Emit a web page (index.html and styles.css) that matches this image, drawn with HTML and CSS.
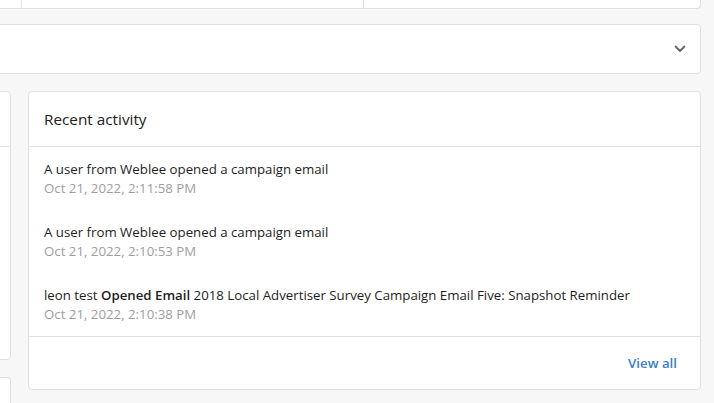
FILE: index.html
```html
<!DOCTYPE html>
<html lang="en">
<head>
<meta charset="utf-8">
<title>Dashboard</title>
<link rel="stylesheet" href="styles.css">
</head>
<body>
<div class="page">
  <div class="top-card">
    <div class="top-cell"></div>
    <div class="top-cell"></div>
    <div class="top-cell"></div>
  </div>
  <div class="collapse-card">
    <svg class="chevron" width="12" height="8" viewBox="0 0 12 8" aria-hidden="true">
      <path d="M1.5 1.5 L6 6 L10.5 1.5" fill="none" stroke="#666" stroke-width="1.8" stroke-linecap="round" stroke-linejoin="round"/>
    </svg>
  </div>
  <div class="columns">
    <div class="left-col">
      <div class="side-card">
        <div class="side-head"></div>
      </div>
      <div class="side-card side-card-next"></div>
    </div>
    <section class="activity">
      <header class="activity-head">Recent activity</header>
      <div class="activity-body">
        <div class="item">
          <div class="item-text">A user from Weblee opened a campaign email</div>
          <div class="item-date">Oct 21, 2022, 2:11:58 PM</div>
        </div>
        <div class="item">
          <div class="item-text">A user from Weblee opened a campaign email</div>
          <div class="item-date">Oct 21, 2022, 2:10:53 PM</div>
        </div>
        <div class="item">
          <div class="item-text">leon test <strong>Opened Email</strong> 2018 Local Advertiser Survey Campaign Email Five: Snapshot Reminder</div>
          <div class="item-date">Oct 21, 2022, 2:10:38 PM</div>
        </div>
      </div>
      <footer class="activity-foot">
        <a class="view-all" href="#">View all</a>
      </footer>
    </section>
  </div>
</div>
</body>
</html>
```

FILE: styles.css
```css
* { box-sizing: border-box; }

html, body {
  margin: 0;
  padding: 0;
  background: #f7f7f7;
  font-family: "Segoe UI", "Open Sans", "Noto Sans", sans-serif;
  color: #212529;
  overflow: hidden;
}

.page {
  width: 1001px;
  margin-left: -300px;
  display: flex;
  flex-direction: column;
}

.top-card {
  height: 9px;
  background: #fff;
  border: 1px solid #e0e0e0;
  border-top: none;
  border-radius: 0 0 4px 4px;
  display: grid;
  grid-template-columns: 320px 342px 1fr;
}

.top-cell + .top-cell {
  border-left: 1px solid #e0e0e0;
}

.collapse-card {
  margin-top: 15px;
  height: 50px;
  background: #fff;
  border: 1px solid #e0e0e0;
  border-radius: 4px;
  display: flex;
  align-items: center;
  justify-content: flex-end;
  padding-right: 14px;
}

.chevron { display: block; }

.columns {
  margin-top: 17px;
  display: flex;
  gap: 17px;
  align-items: flex-start;
}

.left-col {
  width: 311px;
  flex: none;
  display: flex;
  flex-direction: column;
  gap: 17px;
}

.side-card {
  height: 269px;
  background: #fff;
  border: 1px solid #e0e0e0;
  border-radius: 4px;
}

.side-head {
  height: 55px;
  border-bottom: 1px solid #e0e0e0;
}

.side-card-next {
  height: 26px;
  border-bottom: none;
  border-radius: 4px 4px 0 0;
}

.activity {
  flex: 1;
  height: 299px;
  background: #fff;
  border: 1px solid #e0e0e0;
  border-radius: 4px;
  display: flex;
  flex-direction: column;
}

.activity-head {
  height: 55px;
  border-bottom: 1px solid #e0e0e0;
  display: flex;
  align-items: center;
  padding: 0 15px;
  font-size: 15.3px;
  color: #222;
}

.activity-body {
  height: 190px;
  border-bottom: 1px solid #e0e0e0;
  padding: 13px 15px 0;
  display: flex;
  flex-direction: column;
  gap: 25px;
}

.item {
  font-size: 13.25px;
  line-height: 19px;
}

.item-text { color: #1e1e1e; }

.item-text strong { font-weight: 600; }

.item-date { color: #9e9e9e; }

.activity-foot {
  flex: 1;
  display: flex;
  align-items: center;
  justify-content: flex-end;
  padding: 0 23px 0 15px;
}

.view-all {
  font-size: 13.25px;
  font-weight: 600;
  color: #3a7bd5;
  text-decoration: none;
}
```
